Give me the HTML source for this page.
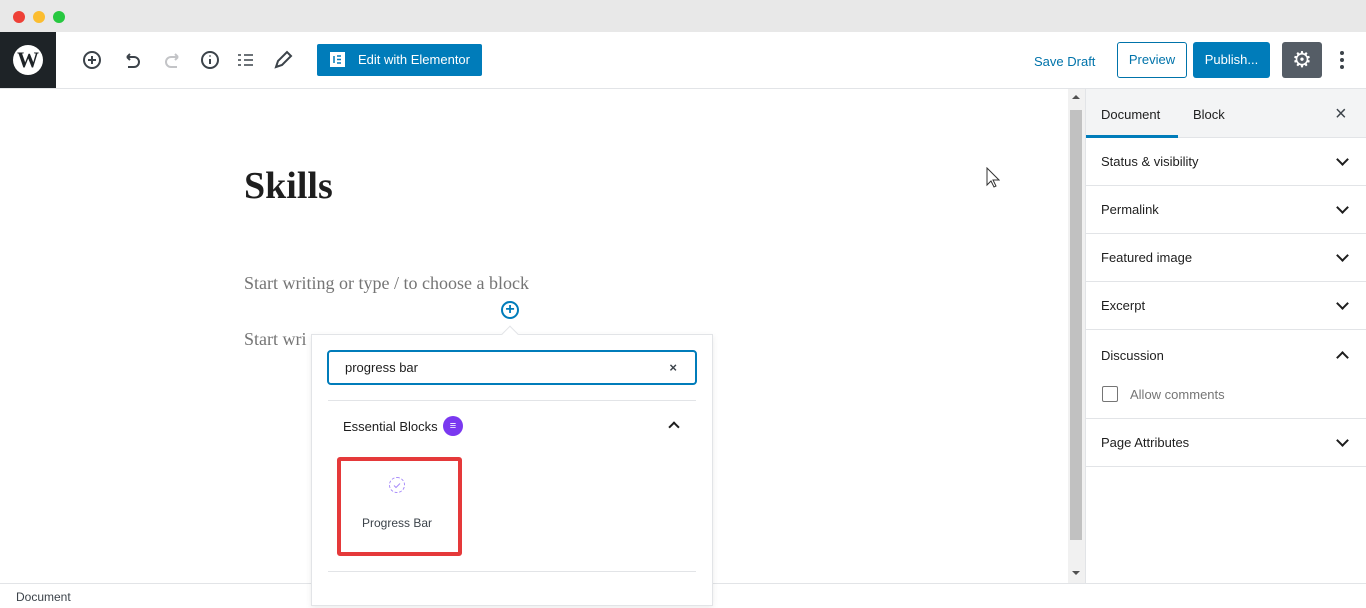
<!DOCTYPE html>
<html><head><style>
*{margin:0;padding:0;box-sizing:border-box}
body{width:1366px;height:608px;overflow:hidden;background:#fff;font-family:"Liberation Sans",sans-serif;color:#1e1e1e;position:relative;font-size:13px}
.a{position:absolute}
.row{position:absolute;left:1086px;width:280px;height:48px;border-bottom:1px solid #e2e4e7;font-size:13px;padding:0 15px;display:flex;align-items:center;justify-content:space-between;color:#1e1e1e}
.chev{width:9px;height:9px;border-right:2px solid #1e1e1e;border-bottom:2px solid #1e1e1e;transform:rotate(45deg);margin-right:4px;margin-top:-5px}
.up{transform:rotate(-135deg);margin-top:5px}
</style></head><body>
<div class="a" style="left:0;top:0;width:1366px;height:32px;background:#e8e8e8"></div>
<div class="a" style="left:13px;top:11px;width:12px;height:12px;border-radius:50%;background:#ee4037"></div>
<div class="a" style="left:33px;top:11px;width:12px;height:12px;border-radius:50%;background:#fbbd30"></div>
<div class="a" style="left:53px;top:11px;width:12px;height:12px;border-radius:50%;background:#27c840"></div>
<div class="a" style="left:0;top:32px;width:56px;height:56px;background:#1e2327"></div>
<div class="a" style="left:13px;top:45px;width:30px;height:30px;border-radius:50%;background:#fff;color:#1e2327;font:bold 22px 'Liberation Serif',serif;text-align:center;line-height:30px">W</div>
<div class="a" style="left:0;top:88px;width:1366px;height:1px;background:#e2e4e7"></div>
<svg class="a" style="left:80px;top:48px" width="230" height="24" fill="none" stroke="#3c434a" stroke-width="2">
<circle cx="12" cy="12" r="8"/><path d="M12 8v8M8 12h8"/>
<path d="M47 9h7a5 5 0 010 10h-6M47 9l3-3M47 9l3 3"/>
<path d="M98 9h-7a5 5 0 000 10h6M98 9l-3-3M98 9l-3 3" stroke="#c3c4c7"/>
<circle cx="130" cy="12" r="8"/><path d="M130 11v5M130 7.5v1"/>
<path d="M158 7h3M158 12h3M158 17h3M164 7h9M164 12h9M164 17h9" stroke-width="1.6"/>
<path d="M196 19l2-6 9-9 4 4-9 9z"/>
</svg>
<div class="a" style="left:317px;top:44px;width:165px;height:32px;background:#007cba;border-radius:2px;color:#fff;font-size:13px;line-height:32px;padding-left:41px">Edit with Elementor</div>
<svg class="a" style="left:330px;top:52px" width="15" height="15"><rect width="15" height="15" fill="#fff"/><path d="M4 4v7M7 4h4M7 7.5h4M7 11h4" stroke="#007cba" stroke-width="1.5"/></svg>
<div class="a" style="left:1034px;top:54px;color:#0073aa;font-size:13px">Save Draft</div>
<div class="a" style="left:1117px;top:42px;width:70px;height:36px;border:1px solid #0073aa;border-radius:3px;color:#0073aa;line-height:34px;text-align:center">Preview</div>
<div class="a" style="left:1193px;top:42px;width:77px;height:36px;background:#007cba;border-radius:3px;color:#fff;line-height:36px;text-align:center">Publish...</div>
<div class="a" style="left:1282px;top:42px;width:40px;height:36px;background:#555d66;border-radius:3px;color:#fff;font-size:22px;line-height:36px;text-align:center">⚙</div>
<div class="a" style="left:1340px;top:51px;width:4px;height:4px;background:#3c434a;border-radius:50%;box-shadow:0 7px 0 #3c434a,0 14px 0 #3c434a"></div>
<div class="a" style="left:244px;top:164px;font:bold 38px 'Liberation Serif',serif;color:#1e1e1e">Skills</div>
<div class="a" style="left:244px;top:273px;font:18px 'Liberation Serif',serif;color:#757575">Start writing or type / to choose a block</div>
<div class="a" style="left:244px;top:329px;font:18px 'Liberation Serif',serif;color:#757575">Start wri</div>
<div class="a" style="left:501px;top:301px;width:18px;height:18px;border:2px solid #007cba;border-radius:50%;color:#007cba;font:bold 16px/13px 'Liberation Sans';text-align:center">+</div>
<svg class="a" style="left:986px;top:167px" width="14" height="22"><path d="M1 1v17l4-4 3 6 2-1-3-6h6z" fill="#fff" stroke="#333"/></svg>
<div class="a" style="left:1068px;top:89px;width:17px;height:494px;background:#f1f1f1"></div>
<div class="a" style="left:1070px;top:110px;width:12px;height:430px;background:#c1c1c1"></div>
<div class="a" style="left:1072px;top:95px;border:4px solid transparent;border-bottom:4px solid #505050;border-top:0"></div>
<div class="a" style="left:1072px;top:571px;border:4px solid transparent;border-top:4px solid #505050;border-bottom:0"></div>
<div class="a" style="left:1085px;top:89px;width:1px;height:494px;background:#e2e4e7"></div>
<div class="a" style="left:1086px;top:89px;width:280px;height:49px;background:#f3f4f5;border-bottom:1px solid #e2e4e7"></div>
<div class="a" style="left:1101px;top:107px;font-size:13px">Document</div>
<div class="a" style="left:1086px;top:135px;width:92px;height:3px;background:#007cba"></div>
<div class="a" style="left:1193px;top:107px;font-size:13px">Block</div>
<div class="a" style="left:1335px;top:103px;font-size:20px;color:#3c434a">×</div>
<div class="row" style="top:138px">Status &amp; visibility<div class="chev"></div></div>
<div class="row" style="top:186px">Permalink<div class="chev"></div></div>
<div class="row" style="top:234px">Featured image<div class="chev"></div></div>
<div class="row" style="top:282px">Excerpt<div class="chev"></div></div>
<div class="row" style="top:330px;height:89px;align-items:flex-start;padding-top:18px">Discussion<div class="chev up"></div></div>
<div class="a" style="left:1102px;top:386px;width:16px;height:16px;border:1px solid #757575;border-radius:2px"></div>
<div class="a" style="left:1130px;top:387px;color:#757575">Allow comments</div>
<div class="row" style="top:419px">Page Attributes<div class="chev"></div></div>
<div class="a" style="left:0;top:583px;width:1366px;height:25px;border-top:1px solid #e2e4e7;background:#fff;padding:6px 16px;font-size:12px;color:#3c434a">Document</div>
<div class="a" style="left:311px;top:334px;width:402px;height:272px;background:#fff;border:1px solid #e2e4e7;box-shadow:0 2px 6px rgba(0,0,0,.08)"></div>
<div class="a" style="left:504px;top:328px;width:12px;height:12px;background:#fff;border-left:1px solid #e2e4e7;border-top:1px solid #e2e4e7;transform:rotate(45deg)"></div>
<div class="a" style="left:327px;top:350px;width:370px;height:35px;border:2px solid #007cba;border-radius:4px;padding-left:16px;line-height:31px;font-size:13px;color:#1e1e1e;background:#fff">progress bar<span style="position:absolute;right:18px;color:#3c434a;font-weight:bold">×</span></div>
<div class="a" style="left:328px;top:400px;width:368px;height:1px;background:#e2e4e7"></div>
<div class="a" style="left:343px;top:419px;font-size:13px;color:#1e1e1e">Essential Blocks</div>
<div class="a" style="left:443px;top:416px;width:20px;height:20px;border-radius:50%;background:#7a38f0;color:#fff;font-size:11px;line-height:20px;text-align:center">≡</div>
<div class="a" style="left:670px;top:423px;width:8px;height:8px;border-left:2px solid #1e1e1e;border-top:2px solid #1e1e1e;transform:rotate(45deg)"></div>
<div class="a" style="left:337px;top:457px;width:125px;height:99px;border:4px solid #e5393a;border-radius:3px"></div>
<div class="a" style="left:389px;top:477px;width:16px;height:16px;border:1px dashed #a78bfa;border-radius:50%"></div>
<svg class="a" style="left:389px;top:477px" width="16" height="16"><path d="M5 8.5l2 2 4-4" stroke="#a78bfa" fill="none"/></svg>
<div class="a" style="left:362px;top:516px;font-size:12px;color:#3c434a">Progress Bar</div>
<div class="a" style="left:328px;top:571px;width:368px;height:1px;background:#e2e4e7"></div>
</body></html>
